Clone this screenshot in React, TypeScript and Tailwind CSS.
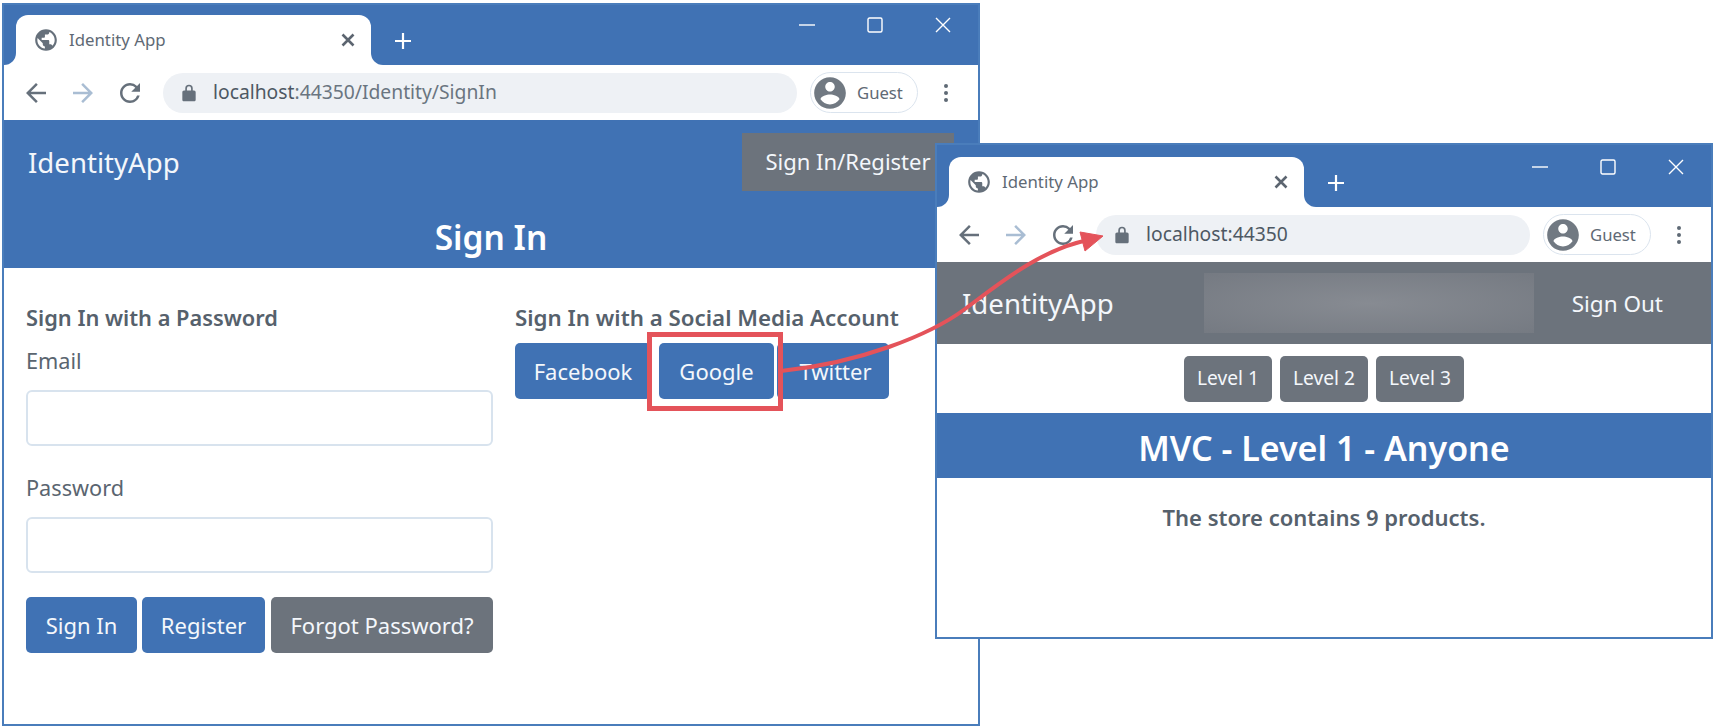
import type { ReactNode } from 'react'

const BLUE = 'bg-[#4072b4]'

function Icon({ d, size, color }: { d: string; size: number; color: string }) {
  return (
    <svg width={size} height={size} viewBox="0 0 24 24" fill={color} className="shrink-0">
      <path d={d} />
    </svg>
  )
}

const PATHS = {
  globe:
    'M12 2C6.48 2 2 6.48 2 12s4.48 10 10 10 10-4.48 10-10S17.52 2 12 2zm-1 17.93c-3.95-.49-7-3.85-7-7.93 0-.62.08-1.21.21-1.79L9 15v1c0 1.1.9 2 2 2v1.93zm6.9-2.54c-.26-.81-1-1.39-1.9-1.39h-1v-3c0-.55-.45-1-1-1H8v-2h2c.55 0 1-.45 1-1V7h2c1.1 0 2-.9 2-2v-.41c2.93 1.19 5 4.06 5 7.41 0 2.08-.8 3.97-2.1 5.39z',
  back: 'M20 11H7.83l5.59-5.59L12 4l-8 8 8 8 1.41-1.41L7.83 13H20v-2z',
  forward: 'M4 11h12.17l-5.59-5.59L12 4l8 8-8 8-1.41-1.41L16.17 13H4v-2z',
  reload:
    'M17.65 6.35A7.958 7.958 0 0 0 12 4c-4.42 0-7.99 3.58-7.99 8s3.57 8 7.99 8c3.73 0 6.84-2.55 7.73-6h-2.08A5.99 5.99 0 0 1 12 18c-3.31 0-6-2.69-6-6s2.69-6 6-6c1.66 0 3.14.69 4.22 1.78L13 11h7V4l-2.35 2.35z',
  lock: 'M18 9h-1.5V6.5a4.5 4.5 0 0 0-9 0V9H6c-1.1 0-2 .9-2 2v9c0 1.1.9 2 2 2h12c1.1 0 2-.9 2-2v-9c0-1.1-.9-2-2-2zM9.5 9V6.5a2.5 2.5 0 0 1 5 0V9h-5z',
  avatar:
    'M12 2C6.48 2 2 6.48 2 12s4.48 10 10 10 10-4.48 10-10S17.52 2 12 2zm0 3c1.66 0 3 1.34 3 3s-1.34 3-3 3-3-1.34-3-3 1.34-3 3-3zm0 14.2c-2.5 0-4.71-1.28-6-3.22.03-1.99 4-3.08 6-3.08 1.99 0 5.97 1.09 6 3.08-1.29 1.94-3.5 3.22-6 3.22z',
}

// Outward curve where the tab meets the toolbar
function Flare({ side }: { side: 'left' | 'right' }) {
  return (
    <div className="h-[12px] w-[12px] bg-white">
      <div className={`h-full w-full ${BLUE} ${side === 'left' ? 'rounded-br-[12px]' : 'rounded-bl-[12px]'}`} />
    </div>
  )
}

function TabStrip() {
  return (
    <div className={`flex h-[60px] shrink-0 items-end ${BLUE}`}>
      <Flare side="left" />
      <div className="flex h-[50px] w-[355px] items-center rounded-t-[12px] bg-white pl-[17px] pr-[16px]">
        <Icon d={PATHS.globe} size={26} color="#66707b" />
        <span className="ml-[10px] flex-1 text-[16.8px] text-[#5f6a75]">Identity App</span>
        <svg width="14" height="14" viewBox="0 0 14 14" stroke="#5c6570" strokeWidth="2.6" className="shrink-0">
          <path d="M1.5 1.5l11 11M12.5 1.5l-11 11" />
        </svg>
      </div>
      <Flare side="right" />
      <svg width="18" height="18" viewBox="0 0 18 18" stroke="#fff" strokeWidth="2.2" className="mb-[15px] ml-[11px] shrink-0">
        <path d="M9 1v16M1 9h16" />
      </svg>
      <div className="ml-auto flex gap-[52px] self-start pr-[27px] pt-[12px]">
        <svg width="16" height="16" viewBox="0 0 16 16" stroke="#fff" strokeWidth="1.4">
          <path d="M0 8h16" />
        </svg>
        <svg width="16" height="16" viewBox="0 0 16 16" stroke="#fff" strokeWidth="1.4" fill="none">
          <rect x="1" y="1" width="14" height="14" rx="1.5" />
        </svg>
        <svg width="16" height="16" viewBox="0 0 16 16" stroke="#fff" strokeWidth="1.4">
          <path d="M1 1l14 14M15 1L1 15" />
        </svg>
      </div>
    </div>
  )
}

function Toolbar({ host, path }: { host: string; path?: string }) {
  return (
    <div className="flex h-[55px] shrink-0 items-center bg-white pl-[17px] pr-[30px]">
      <Icon d={PATHS.back} size={30} color="#66707b" />
      <div className="ml-[17px]">
        <Icon d={PATHS.forward} size={30} color="#a9bdd3" />
      </div>
      <div className="ml-[17px]">
        <Icon d={PATHS.reload} size={30} color="#66707b" />
      </div>
      <div className="ml-[18px] flex h-[40px] min-w-0 flex-1 items-center rounded-full bg-[#eef1f5] pl-[16px]">
        <Icon d={PATHS.lock} size={20} color="#66707b" />
        <span className="ml-[14px] text-[19.3px] text-[#6a7580]">
          <span className="text-[#4d5863]">{host}</span>
          {path}
        </span>
      </div>
      <div className="ml-[13px] flex h-[41px] w-[108px] shrink-0 items-center rounded-full border border-[#dbe4ee]">
        <Icon d={PATHS.avatar} size={38} color="#717982" />
        <span className="ml-[8px] text-[16.7px] text-[#5f6a75]">Guest</span>
      </div>
      <div className="ml-[26px] flex shrink-0 flex-col gap-[3px]">
        <div className="h-[4px] w-[4px] rounded-full bg-[#5f6a75]" />
        <div className="h-[4px] w-[4px] rounded-full bg-[#5f6a75]" />
        <div className="h-[4px] w-[4px] rounded-full bg-[#5f6a75]" />
      </div>
    </div>
  )
}

function Btn({ children, width, color = BLUE }: { children: ReactNode; width: string; color?: string }) {
  return <div className={`flex h-[56px] items-center justify-center rounded-[5px] text-[22px] text-[#f4f7fb] ${width} ${color}`}>{children}</div>
}

function Field({ label, className }: { label: string; className: string }) {
  return (
    <div className={className}>
      <div className="text-[21.7px] leading-[28px] text-[#5a6570]">{label}</div>
      <div className="mt-[15px] h-[56px] rounded-[6px] border-2 border-[#d8e3ee] bg-white" />
    </div>
  )
}

function SignInWindow() {
  return (
    <div className="absolute left-[2px] top-[3px] flex h-[723px] w-[978px] flex-col border-2 border-[#4a7dbb] bg-white">
      <TabStrip />
      <Toolbar host="localhost" path=":44350/Identity/SignIn" />
      <div className={`flex h-[83px] shrink-0 items-center justify-between pl-[24px] pr-[24px] ${BLUE}`}>
        <span className="pt-[2px] text-[27.6px] text-[#f4f7fb]">IdentityApp</span>
        <div className="flex h-[58px] w-[212px] items-center justify-center bg-[#6c737c] text-[22px] text-[#f4f7fb]">Sign In/Register</div>
      </div>
      <div className={`flex h-[65px] shrink-0 items-center justify-center pt-[4px] text-[33.5px] font-semibold text-white ${BLUE}`}>Sign In</div>
      <div className="flex gap-[22px] px-[22px] pt-[36px]">
        <div className="w-[467px]">
          <div className="text-[21.8px] font-semibold leading-[28px] text-[#56616c]">Sign In with a Password</div>
          <Field label="Email" className="mt-[15px]" />
          <Field label="Password" className="mt-[28px]" />
          <div className="mt-[24px] flex gap-[5px]">
            <Btn width="w-[111px]">Sign In</Btn>
            <Btn width="w-[123px]">Register</Btn>
            <Btn width="w-[222px] ml-[1px]" color="bg-[#6c737c]">
              Forgot Password?
            </Btn>
          </div>
        </div>
        <div>
          <div className="whitespace-nowrap text-[22.3px] font-semibold leading-[28px] text-[#56616c]">Sign In with a Social Media Account</div>
          <div className="mt-[11px] flex">
            <Btn width="w-[136px]">Facebook</Btn>
            <Btn width="w-[115px] ml-[8px]">Google</Btn>
            <Btn width="w-[112px] ml-[3px]">
              <span className="pl-[5px]">Twitter</span>
            </Btn>
          </div>
        </div>
      </div>
    </div>
  )
}

function StoreWindow() {
  return (
    <div className="absolute left-[935px] top-[143px] flex h-[496px] w-[778px] flex-col border-2 border-[#4a7dbb] bg-white">
      <div className={`h-[2px] shrink-0 ${BLUE}`} />
      <TabStrip />
      <Toolbar host="localhost:44350" />
      <div className="flex h-[82px] shrink-0 items-center bg-[#6c737c] pl-[25px] pr-[48px]">
        <span className="pt-[2px] text-[27.6px] text-[#f4f7fb]">IdentityApp</span>
        <div className="ml-[90px] h-[60px] w-[330px] bg-[radial-gradient(ellipse_at_center,#878b92,#757a82)]" />
        <span className="ml-auto pt-[2px] text-[22.5px] text-[#f4f7fb]">Sign Out</span>
      </div>
      <div className="flex h-[69px] shrink-0 items-center justify-center gap-[8px]">
        {['Level 1', 'Level 2', 'Level 3'].map((label) => (
          <div key={label} className="flex h-[46px] w-[88px] items-center justify-center rounded-[5px] bg-[#6c737c] text-[19.2px] text-[#f4f7fb]">
            {label}
          </div>
        ))}
      </div>
      <div className={`flex h-[65px] shrink-0 items-center justify-center pt-[6px] text-[34px] font-semibold text-white ${BLUE}`}>
        MVC - Level 1 - Anyone
      </div>
      <div className="pt-[25px] text-center text-[22px] font-semibold leading-[28px] text-[#56616c]">The store contains 9 products.</div>
    </div>
  )
}

export default function App() {
  return (
    <div className="relative h-[728px] w-[1714px] overflow-hidden bg-white [font-family:'Noto_Sans',sans-serif]">
      <SignInWindow />
      <StoreWindow />
      {/* Callout: red frame round the Google button and the arrow to the second window */}
      <div className="absolute left-[647px] top-[332px] h-[79px] w-[136px] border-[5px] border-[#e4535a]" />
      <svg className="absolute left-0 top-0" width="1714" height="728" fill="none">
        <path d="M781 371C860 363 930 335 965 309C1000 283 1040 250 1088 240" stroke="#e4535a" strokeWidth="4" />
        <path d="M1103 236L1080 232L1085 251Z" fill="#e4535a" stroke="#e4535a" strokeWidth="1" />
      </svg>
    </div>
  )
}
